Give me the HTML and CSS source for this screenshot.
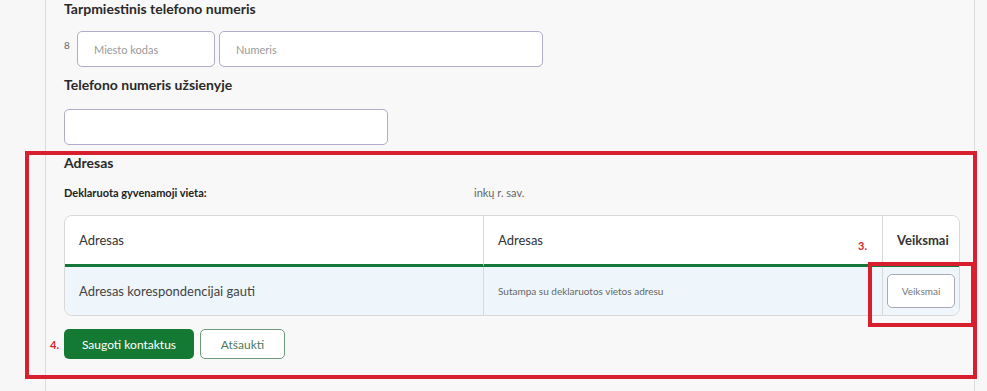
FILE: index.html
```html
<!DOCTYPE html>
<html lang="lt">
<head>
  <meta charset="UTF-8">
  <meta name="viewport" content="width=device-width, initial-scale=1.0">
  <title>Kontaktai</title>
  <link rel="stylesheet" href="styles.css">
</head>
<body>
  <div class="panel">
    <!-- Tarpmiestinis telefonas -->
    <h2 class="field-title first">Tarpmiestinis telefono numeris</h2>
    <div class="phone-row">
      <span class="prefix">8</span>
      <input class="input city" type="text" placeholder="Miesto kodas">
      <input class="input number" type="text" placeholder="Numeris">
    </div>

    <!-- Telefonas užsienyje -->
    <h2 class="field-title">Telefono numeris užsienyje</h2>
    <input class="input foreign" type="text">

    <!-- Adresas -->
    <h2 class="field-title address">Adresas</h2>
    <div class="declared">
      <span class="declared-label">Deklaruota gyvenamoji vieta:</span>
      <span class="declared-value">inkų r. sav.</span>
    </div>

    <table class="addr-table">
      <thead>
        <tr>
          <th class="col-type">Adresas</th>
          <th class="col-addr">Adresas</th>
          <th class="col-act">Veiksmai</th>
        </tr>
      </thead>
      <tbody>
        <tr>
          <td class="col-type">Adresas korespondencijai gauti</td>
          <td class="col-addr small">Sutampa su deklaruotos vietos adresu</td>
          <td class="col-act"><button class="btn-actions">Veiksmai</button></td>
        </tr>
      </tbody>
    </table>

    <div class="buttons">
      <button class="btn-save">Saugoti kontaktus</button>
      <button class="btn-cancel">Atšaukti</button>
    </div>

    <!-- Anotacijos -->
    <div class="mark mark-big"></div>
    <div class="mark mark-small"></div>
    <span class="mark-num num-3">3.</span>
    <span class="mark-num num-4">4.</span>
  </div>
</body>
</html>
```

FILE: styles.css
```css
/* Bendras */
body {
  margin: 0;
  background: #f7f7f7;
  font-family: 'Lato', 'Noto Sans', sans-serif;
  color: #333;
}

.panel {
  position: relative;
  margin-left: 45px;
  width: 910px;
  min-height: 391px;
  padding: 0 0 0 18px;
  border-left: 1px solid #dcdcdc;
  border-right: 1px solid #dcdcdc;
  background: #f8f8f8;
  box-sizing: content-box;
}

.field-title {
  margin: 0;
  font-size: 14px;
  font-weight: 700;
  color: #2a2a2a;
  line-height: 18px;
}

/* Laukai */
.input {
  height: 36px;
  box-sizing: border-box;
  border: 1px solid #aeaecb;
  border-radius: 5px;
  background: #fff;
  padding: 0 16px;
  font-family: inherit;
  font-size: 11px;
  color: #333;
}
.input::placeholder {
  color: #9a9a9a;
}

.phone-row {
  display: flex;
  gap: 4px;
  margin-top: 13px;
}
.prefix {
  width: 9px;
  font-size: 10px;
  color: #666;
  padding-top: 8px;
}
.input.city {
  width: 138px;
}
.input.number {
  width: 324px;
}

.phone-row + .field-title {
  margin-top: 9px;
}
.input.foreign {
  display: block;
  width: 324px;
  margin-top: 15px;
}

.field-title.address {
  margin-top: 9px;
}

.declared {
  display: flex;
  margin-top: 14px;
  font-size: 11px;
  line-height: 14px;
}
.declared-label {
  width: 410px;
  font-weight: 700;
  color: #222;
}
.declared-value {
  color: #666;
}

/* Lentelė */
.addr-table {
  width: 896px;
  margin-top: 15px;
  border-collapse: separate;
  border-spacing: 0;
  border: 1px solid #d8d8d8;
  border-radius: 8px;
  overflow: hidden;
  font-size: 13px;
}
.addr-table th {
  height: 48px;
  padding: 0 14px;
  background: #fff;
  text-align: left;
  font-weight: 400;
  color: #333;
  border-bottom: 3px solid #15763a;
}
.addr-table td {
  height: 48px;
  padding: 0 14px;
  background: #eef6fb;
  color: #444;
}
.addr-table .col-type {
  width: 390px;
}
.addr-table .col-addr {
  border-left: 1px solid #d8d8d8;
}
.addr-table .col-act {
  width: 48px;
  padding: 0 4px;
  border-left: 1px solid #d8d8d8;
}
.addr-table th.col-act {
  font-weight: 700;
  padding-left: 14px;
}
.addr-table td.small {
  font-size: 10px;
  color: #666;
}

.btn-actions {
  width: 68px;
  height: 34px;
  border: 1px solid #a9a9b4;
  border-radius: 5px;
  background: #fff;
  font-family: inherit;
  font-size: 10px;
  color: #777;
}

/* Mygtukai */
.buttons {
  display: flex;
  gap: 6px;
  margin-top: 13px;
}
.btn-save {
  height: 30px;
  width: 130px;
  border: none;
  border-radius: 5px;
  background: #147a33;
  color: #fff;
  font-family: inherit;
  font-size: 12px;
}
.btn-cancel {
  height: 30px;
  width: 85px;
  border: 1px solid #6d9a7c;
  border-radius: 5px;
  background: #fff;
  color: #4f7a5e;
  font-family: inherit;
  font-size: 12px;
}

/* Raudonos anotacijos */
.mark {
  position: absolute;
  border: 4px solid #d71f2d;
}
.mark-big {
  left: -21px;
  top: 151px;
  width: 944px;
  height: 220px;
}
.mark-small {
  left: 822px;
  top: 262px;
  width: 99px;
  height: 57px;
}
.mark-num {
  position: absolute;
  color: #d71f2d;
  font-weight: 700;
  font-size: 11px;
}
.num-3 {
  left: 812px;
  top: 239px;
}
.num-4 {
  left: 4px;
  top: 338px;
}
```
